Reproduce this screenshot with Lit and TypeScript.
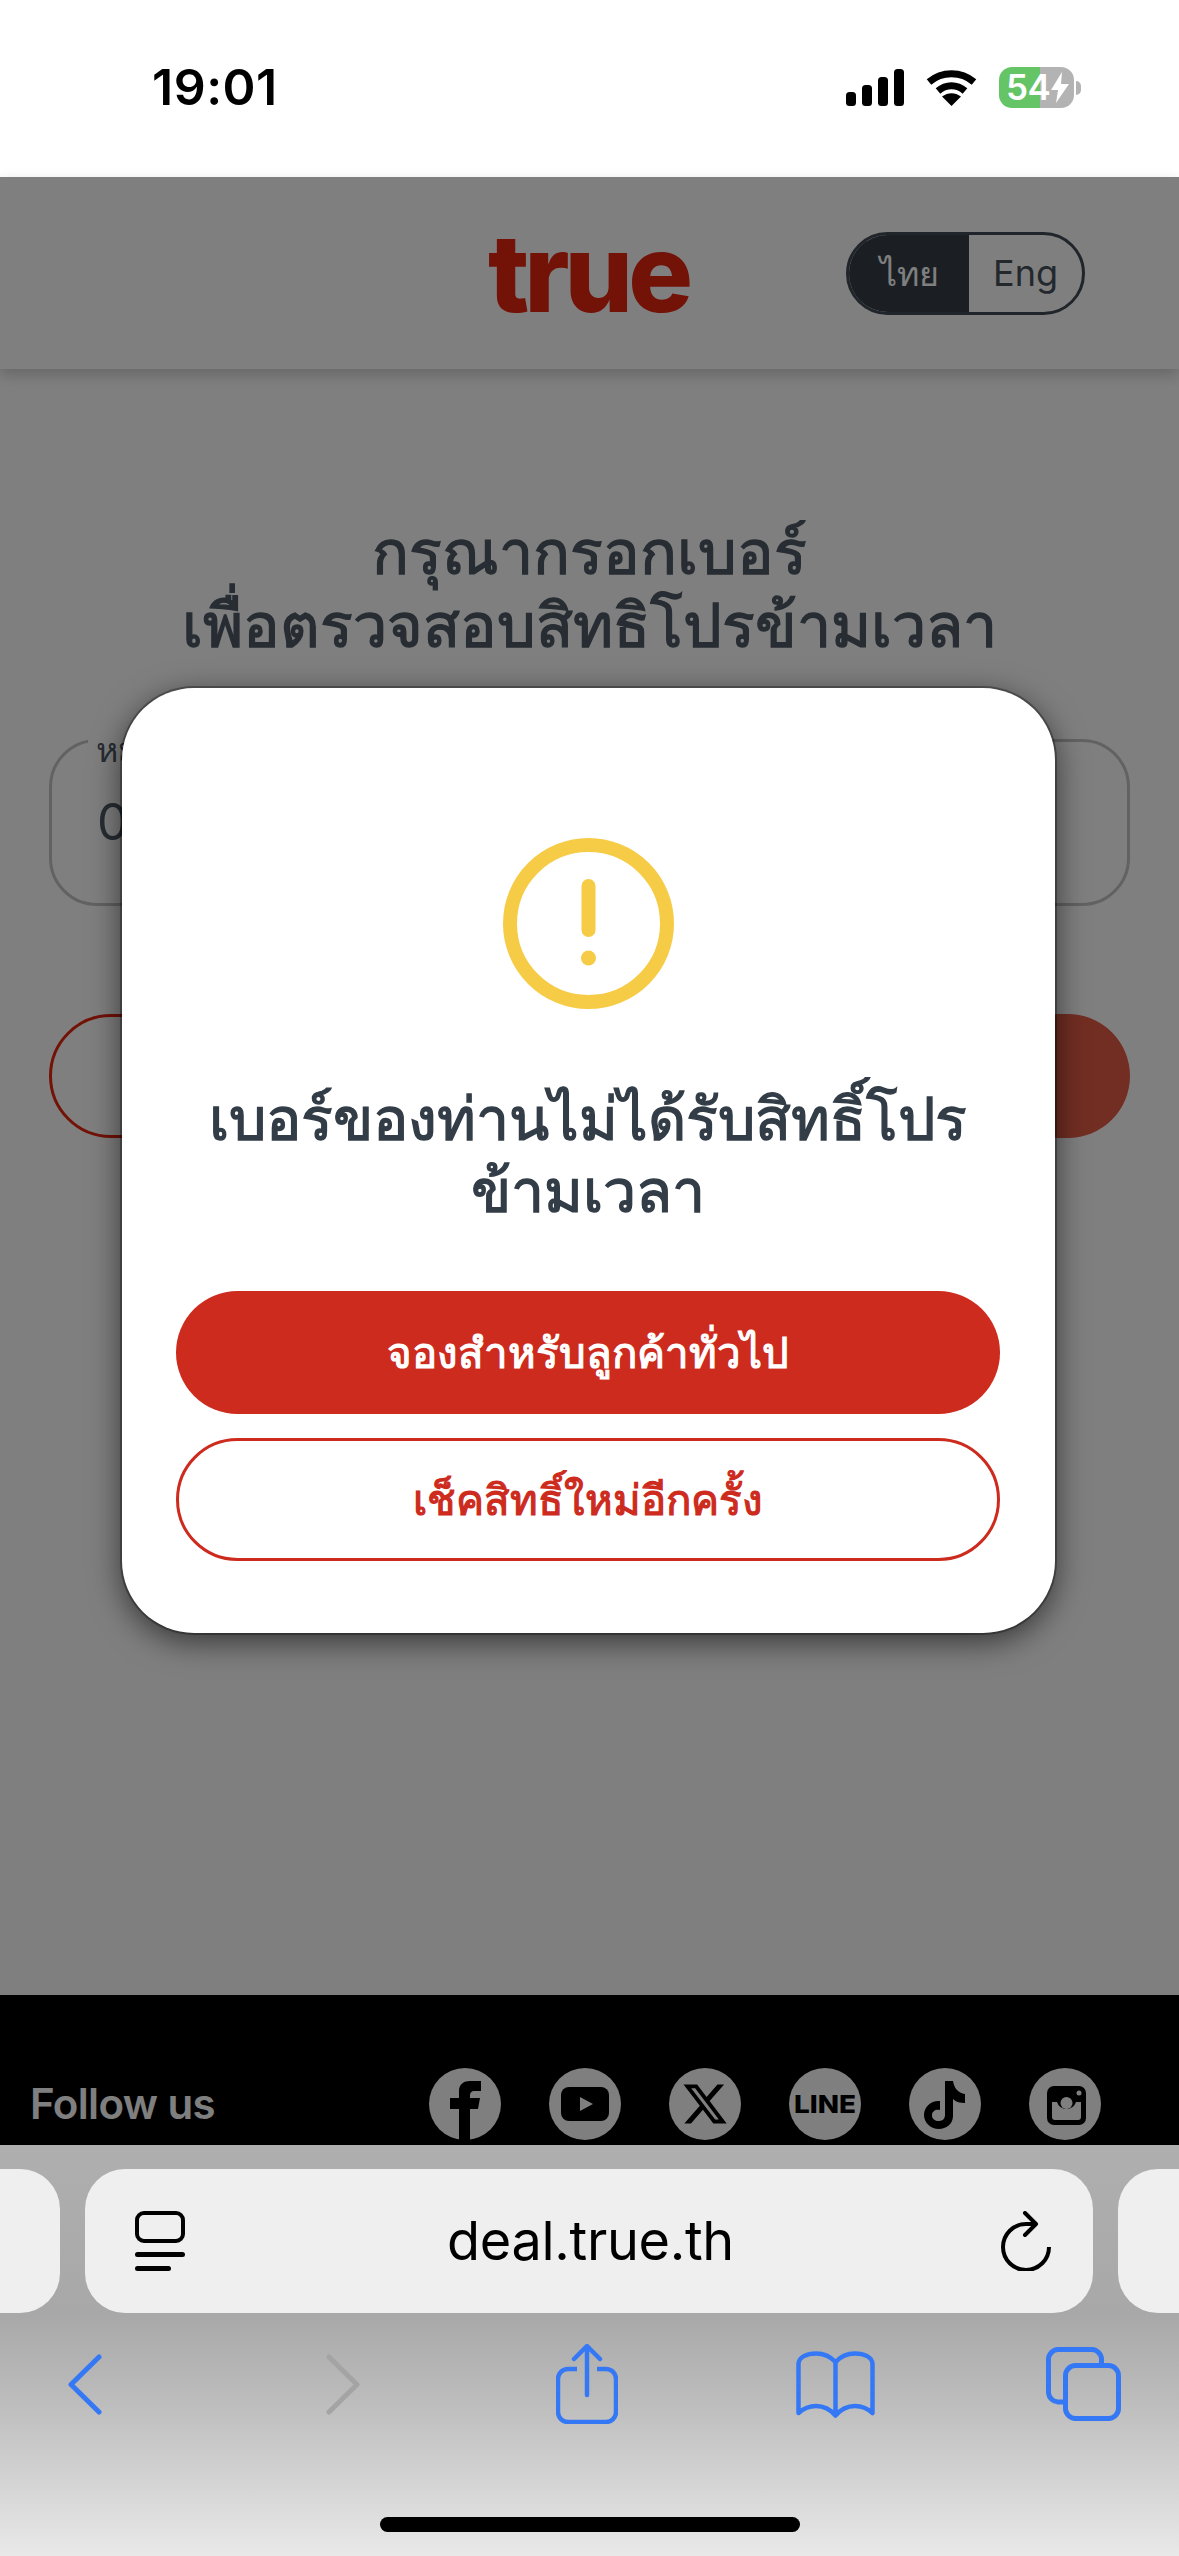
import { LitElement, html, css, svg } from 'lit';
import { customElement } from 'lit/decorators.js';

const socials = [
  // facebook
  svg`<circle cx="36" cy="36" r="36" fill="#fff"/><path d="M30 72V41H21V30H30V23C30 16 35 13 41 13H52V23H46C42 23 41 25 41 28V30H51L49 41H41V72Z" fill="#000"/>`,
  // youtube
  svg`<circle cx="36" cy="36" r="36" fill="#fff"/><rect x="12" y="19" width="48" height="34" rx="8" fill="#000"/><path d="M31 29L44 36L31 43Z" fill="#fff"/>`,
  // x
  svg`<circle cx="36" cy="36" r="36" fill="#fff"/><path transform="translate(12 12) scale(2)" fill-rule="evenodd" d="M18.244 2.25h3.308l-7.227 8.26 8.502 11.24H16.17l-5.214-6.817L4.99 21.75H1.68l7.73-8.835L1.254 2.25H8.08l4.713 6.231zm-1.161 17.52h1.833L7.084 4.126H5.117z" fill="#000"/>`,
  // line
  svg`<circle cx="36" cy="36" r="36" fill="#fff"/><text x="36" y="45" text-anchor="middle" textLength="62" lengthAdjust="spacingAndGlyphs" font-family="Inter, sans-serif" font-weight="800" font-size="25" fill="#000">LINE</text>`,
  // tiktok
  svg`<circle cx="36" cy="36" r="36" fill="#fff"/><path d="M36 13h8c1 7 5 12 12 13v9c-5 0-9-1-12-4v17c0 8-7 13-14 13-8 0-15-6-15-14 0-9 8-15 16-14v9c-4-1-8 1-8 5 0 4 3 6 7 6 4 0 6-3 6-6z" fill="#000"/>`,
  // instagram
  svg`<circle cx="36" cy="36" r="36" fill="#fff"/><rect x="18" y="18" width="39" height="39" rx="7" fill="#000"/><circle cx="37.5" cy="35" r="6" fill="#fff"/><circle cx="50" cy="25" r="2.5" fill="#fff"/><path d="M23 34h5a10 10 0 0 0 19 0h5v15a3 3 0 0 1-3 3H26a3 3 0 0 1-3-3z" fill="#fff"/>`,
];

@customElement('app-root')
export class AppRoot extends LitElement {
  static styles = css`
    :host {
      display: flex;
      flex-direction: column;
      width: 1179px;
      height: 2556px;
      overflow: hidden;
      background: #fff;
      font-family: Inter, 'Noto Sans', sans-serif;
    }

    .status {
      height: 177px;
      flex: none;
      display: flex;
      align-items: flex-start;
      justify-content: space-between;
      padding: 67px 98px 0 152px;
      box-sizing: border-box;
    }
    .time {
      font: 600 50px/41px Inter, sans-serif;
      letter-spacing: 0.5px;
      color: #000;
    }
    .status-icons {
      display: flex;
      align-items: center;
      gap: 22px;
    }
    .status-icons svg {
      display: block;
    }
    .battery-wrap {
      display: flex;
      align-items: center;
      gap: 2px;
    }
    .battery {
      width: 75px;
      height: 41px;
      border-radius: 13px;
      background: linear-gradient(90deg, #65c466 41px, #b3b3b3 41px);
      display: flex;
      align-items: center;
      padding-left: 7px;
      box-sizing: border-box;
      color: #fff;
      font: 600 35px/41px Inter, sans-serif;
      letter-spacing: -0.5px;
    }
    .nub {
      width: 5px;
      height: 14px;
      border-radius: 0 7px 7px 0;
      background: #b3b3b3;
    }

    .web {
      flex: 1;
      position: relative;
      display: flex;
      flex-direction: column;
      min-height: 0;
    }
    header {
      height: 192px;
      flex: none;
      box-sizing: border-box;
      padding-right: 94px;
      display: grid;
      grid-template-columns: 1fr auto;
      align-items: center;
      background: #fff;
      box-shadow: 0 6px 14px rgba(0, 0, 0, 0.2);
    }
    .logo {
      justify-self: end;
      margin-right: 158px;
      font: 800 108px/104px Inter, sans-serif;
      letter-spacing: -5px;
      color: #e6240f;
    }
    .lang {
      width: 239px;
      height: 83px;
      box-sizing: border-box;
      border: 3px solid #3f4a55;
      border-radius: 42px;
      overflow: hidden;
      display: grid;
      grid-template-columns: 120px 1fr;
      font-size: 36px;
      line-height: 77px;
      text-align: center;
      color: #46505b;
    }
    .lang .on {
      background: #363f47;
      color: #fff;
      font-size: 34px;
    }

    main {
      flex: 1;
      padding: 147px 49px 0;
      text-align: center;
    }
    h1 {
      margin: 0;
      font-size: 61px;
      line-height: 73px;
      font-weight: 400;
      -webkit-text-stroke: 1.4px currentColor;
      color: #4e5a66;
    }
    .field {
      position: relative;
      margin-top: 77px;
      height: 167px;
      box-sizing: border-box;
      border: 3px solid #c4c4c4;
      border-radius: 48px;
      padding: 0 45px;
      text-align: left;
      font-size: 50px;
      line-height: 161px;
      color: #4e5a66;
    }
    .field label {
      position: absolute;
      left: 36px;
      top: -12px;
      padding: 0 8px;
      background: #fff;
      font-size: 34px;
      line-height: 40px;
      color: #4e5a66;
    }
    .actions {
      margin-top: 108px;
      display: grid;
      grid-template-columns: 1fr 1fr;
      gap: 24px;
    }
    .actions div {
      height: 124px;
      box-sizing: border-box;
      border-radius: 62px;
    }
    .actions .ghost {
      border: 3px solid #e6240f;
    }
    .actions .fill {
      background: #e45c46;
    }

    footer {
      height: 150px;
      flex: none;
      box-sizing: border-box;
      background: #000;
      padding: 0 78px 5px 30px;
      display: flex;
      align-items: flex-end;
      justify-content: space-between;
    }
    .follow {
      font-size: 42px;
      line-height: 72px;
      font-weight: 600;
      letter-spacing: -0.6px;
      color: #fff;
    }
    .social {
      display: flex;
      gap: 48px;
    }
    .social svg {
      display: block;
    }

    .overlay {
      position: absolute;
      inset: 0;
      background: rgba(0, 0, 0, 0.5);
      display: flex;
      justify-content: center;
      align-items: flex-start;
      padding-top: 511px;
    }
    .modal {
      width: 933px;
      height: 945px;
      margin-right: 2px;
      box-sizing: border-box;
      background: #fff;
      border-radius: 72px;
      box-shadow: 0 0 0 2px rgba(0, 0, 0, 0.3), 0 8px 32px rgba(0, 0, 0, 0.6);
      padding: 150px 55px 0 54px;
      display: flex;
      flex-direction: column;
      align-items: center;
      text-align: center;
    }
    .modal svg {
      display: block;
      flex: none;
    }
    .modal h2 {
      margin: 74px 0 0;
      font-size: 59px;
      line-height: 72px;
      font-weight: 400;
      -webkit-text-stroke: 1.4px currentColor;
      color: #333d47;
    }
    .btn {
      width: 824px;
      height: 123px;
      box-sizing: border-box;
      border-radius: 62px;
      flex: none;
      font-size: 42px;
      font-weight: 400;
      -webkit-text-stroke: 1.2px currentColor;
      display: flex;
      align-items: center;
      justify-content: center;
    }
    .btn.primary {
      margin-top: 64px;
      background: #cd2b1e;
      color: #fff;
    }
    .btn.outline {
      margin-top: 24px;
      border: 3px solid #cd2b1e;
      color: #cd2b1e;
    }

    .toolbar {
      height: 411px;
      flex: none;
      position: relative;
      background: linear-gradient(180deg, #afafaf 0, #a8a8a8 41%, #bcbcbc 62%, #e9e9e9 100%);
      padding-top: 24px;
      box-sizing: border-box;
    }
    .tabs {
      display: grid;
      grid-template-columns: 60px 1008px 61px;
      column-gap: 25px;
      height: 144px;
    }
    .stub {
      background: #efefef;
      border-radius: 0 40px 40px 0;
    }
    .stub.right {
      border-radius: 40px 0 0 40px;
    }
    .address {
      background: #efefef;
      border-radius: 40px;
      display: flex;
      align-items: center;
      justify-content: space-between;
      padding: 0 42px 0 50px;
      font: 400 54px/60px Inter, sans-serif;
      letter-spacing: -0.3px;
      color: #000;
    }
    .address span {
      margin-right: 5px;
    }
    .address svg {
      display: block;
    }
    .nav {
      display: grid;
      grid-template-columns: 258px 230px 240px 250px auto;
      padding: 31px 0 0 68px;
      justify-content: start;
      height: 80px;
      align-items: center;
    }
    .nav svg {
      display: block;
    }
    .home {
      width: 420px;
      height: 15px;
      border-radius: 8px;
      background: #000;
      margin: 93px auto 0 380px;
    }
  `;

  render() {
    return html`
      <div class="status">
        <div class="time">19:01</div>
        <div class="status-icons">
          <svg width="58" height="37" viewBox="0 0 58 37">
            <rect x="0" y="23" width="10" height="14" rx="3.5" />
            <rect x="16" y="16" width="10" height="21" rx="3.5" />
            <rect x="32" y="8" width="10" height="29" rx="3.5" />
            <rect x="48" y="0" width="10" height="37" rx="3.5" />
          </svg>
          <svg width="51" height="37" viewBox="0 0 51 37">
            <path d="M3 13C16 2 35 2 48 13" fill="none" stroke="#000" stroke-width="7" />
            <path d="M12 22C20 15 31 15 39 22" fill="none" stroke="#000" stroke-width="7" />
            <path d="M25.5 37L16 27.5C22 23 29 23 35 27.5Z" />
          </svg>
          <div class="battery-wrap">
            <div class="battery">
              54<svg width="20" height="31" viewBox="0 0 20 31">
                <path d="M12 0L1 18H8L6 31L19 12H11Z" fill="#fff" />
              </svg>
            </div>
            <div class="nub"></div>
          </div>
        </div>
      </div>

      <div class="web">
        <header>
          <div class="logo">true</div>
          <div class="lang">
            <div class="on">ไทย</div>
            <div>Eng</div>
          </div>
        </header>
        <main>
          <h1>กรุณากรอกเบอร์<br />เพื่อตรวจสอบสิทธิโปรข้ามเวลา</h1>
          <div class="field">
            <label>หมายเลขโทรศัพท์</label>
            0
          </div>
          <div class="actions">
            <div class="ghost"></div>
            <div class="fill"></div>
          </div>
        </main>
        <footer>
          <div class="follow">Follow us</div>
          <div class="social">
            ${socials.map((s) => html`<svg width="72" height="72" viewBox="0 0 72 72">${s}</svg>`)}
          </div>
        </footer>
        <div class="overlay">
          <div class="modal">
            <svg width="171" height="171" viewBox="0 0 171 171">
              <circle cx="85.5" cy="85.5" r="78.5" fill="none" stroke="#f6cb45" stroke-width="14" />
              <path d="M85.5 48V92" stroke="#f6cb45" stroke-width="14" stroke-linecap="round" />
              <circle cx="85.5" cy="120" r="7.5" fill="#f6cb45" />
            </svg>
            <h2>เบอร์ของท่านไม่ได้รับสิทธิ์โปร<br />ข้ามเวลา</h2>
            <div class="btn primary">จองสำหรับลูกค้าทั่วไป</div>
            <div class="btn outline">เช็คสิทธิ์ใหม่อีกครั้ง</div>
          </div>
        </div>
      </div>

      <div class="toolbar">
        <div class="tabs">
          <div class="stub"></div>
          <div class="address">
            <svg width="50" height="60" viewBox="0 0 50 60" fill="none" stroke="#000">
              <rect x="2" y="2" width="46" height="28" rx="7" stroke-width="4" />
              <path d="M2.5 43.5H47.5M2.5 57.5H33.5" stroke-width="5" stroke-linecap="round" />
            </svg>
            <span>deal.true.th</span>
            <svg width="50" height="60" viewBox="0 0 50 60" fill="none" stroke="#000" stroke-width="4">
              <path d="M34 13H25A23 23 0 1 0 48 36" />
              <path d="M24 2L35 13L24 24" stroke-linecap="round" stroke-linejoin="round" />
            </svg>
          </div>
          <div class="stub right"></div>
        </div>
        <div class="nav">
          <svg width="34" height="61" viewBox="0 0 34 61" fill="none" stroke="#3478f6" stroke-width="5" stroke-linecap="round" stroke-linejoin="round">
            <path d="M31 3L3 30.5L31 58" />
          </svg>
          <svg width="34" height="61" viewBox="0 0 34 61" fill="none" stroke="#a4a4a4" stroke-width="5" stroke-linecap="round" stroke-linejoin="round">
            <path d="M3 3L31 30.5L3 58" />
          </svg>
          <svg width="62" height="80" viewBox="0 0 62 80" fill="none" stroke="#3478f6" stroke-width="4.5" stroke-linecap="round" stroke-linejoin="round">
            <path d="M21 25H12A10 10 0 0 0 2 35V68A10 10 0 0 0 12 78H50A10 10 0 0 0 60 68V35A10 10 0 0 0 50 25H41" stroke-linecap="butt" />
            <path d="M31 51V3M18 15L31 2L44 15" />
          </svg>
          <svg width="79" height="67" viewBox="0 0 79 67" fill="none" stroke="#3478f6" stroke-width="4.5" stroke-linecap="round" stroke-linejoin="round">
            <path d="M39.5 11C34 5 27 2.5 20 2.5C11 2.5 2.5 6 2.5 13V62C8 57 14 55 20 55C28 55 34 58 39.5 64.5C45 58 51 55 59 55C65 55 71 57 76.5 62V13C76.5 6 68 2.5 59 2.5C52 2.5 45 5 39.5 11ZM39.5 11V64.5" />
          </svg>
          <svg width="75" height="74" viewBox="0 0 75 74" fill="none" stroke="#3478f6" stroke-width="5">
            <path d="M18 55H12A10 10 0 0 1 2.5 46V12A10 10 0 0 1 12 2.5H46A10 10 0 0 1 55.5 12V17" />
            <rect x="19.5" y="18.5" width="53" height="53" rx="10" />
          </svg>
        </div>
        <div class="home"></div>
      </div>
    `;
  }
}
